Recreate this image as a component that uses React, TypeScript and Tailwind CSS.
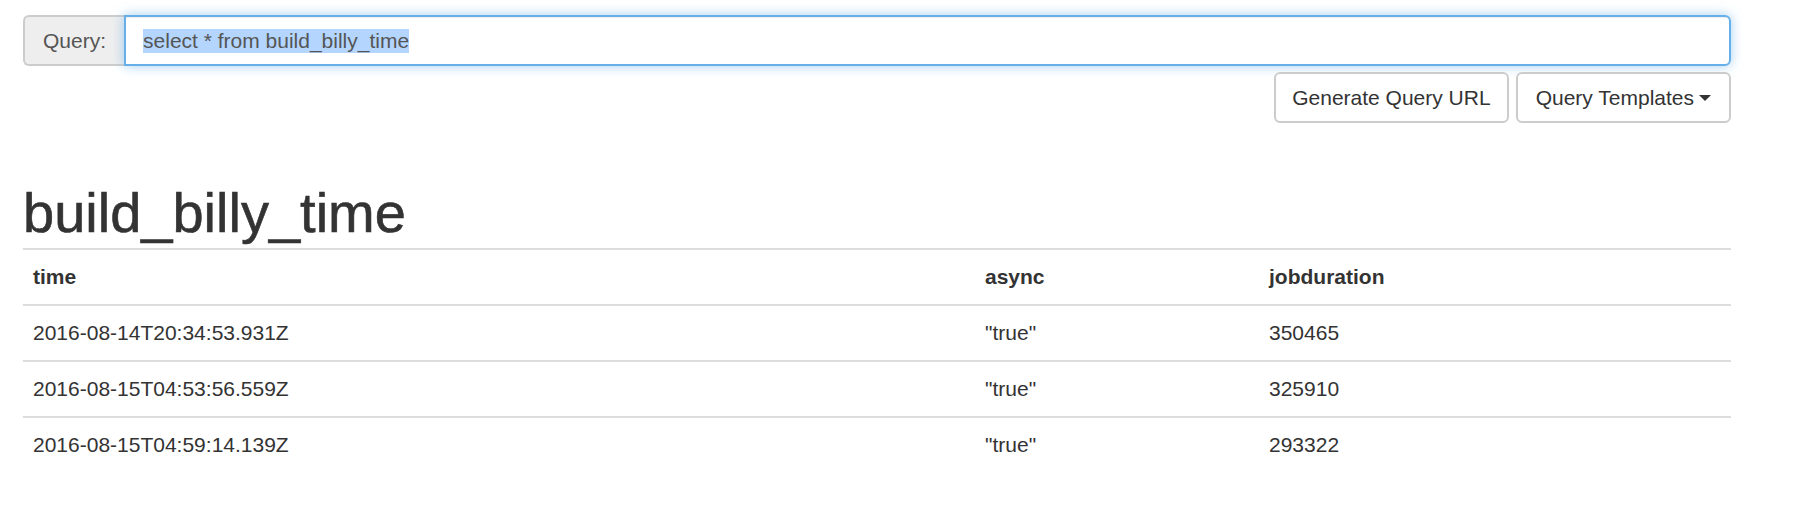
import React from "react"

const rows = [
  { time: "2016-08-14T20:34:53.931Z", async: "\"true\"", jobduration: "350465" },
  { time: "2016-08-15T04:53:56.559Z", async: "\"true\"", jobduration: "325910" },
  { time: "2016-08-15T04:59:14.139Z", async: "\"true\"", jobduration: "293322" },
]

export default function App() {
  return (
    <div className="min-h-screen bg-white font-['Liberation_Sans',Arial,sans-serif] text-[21px] text-[#333]">
      <div className="ml-[23px] w-[1708px] pt-[15px]">
        {/* query input */}
        <div className="flex h-[51px]">
          <span className="flex items-center rounded-l-[6px] border-2 border-r-0 border-[#ccc] bg-[#eee] px-[18px] text-[#555]">
            Query:
          </span>
          <div className="flex flex-1 items-center rounded-r-[6px] border-2 border-[#66afe9] px-[17px] text-[#555] shadow-[inset_0_1px_1px_rgba(0,0,0,0.075),0_0_12px_rgba(102,175,233,0.6)]">
            <span className="bg-[#b4d5fe] leading-[24px]">select * from build_billy_time</span>
          </div>
        </div>

        <div className="mt-[6px] flex justify-end gap-[7px]">
          <button className="h-[51px] rounded-[6px] border-2 border-[#ccc] bg-white px-[16px] text-[#333]">
            Generate Query URL
          </button>
          <button className="flex h-[51px] items-center rounded-[6px] border-2 border-[#ccc] bg-white px-[18px] text-[#333]">
            Query Templates
            <span className="ml-[5px] inline-block h-0 w-0 border-x-[6px] border-t-[6px] border-x-transparent border-t-[#333]" />
          </button>
        </div>

        <h1 className="mt-[60px] mb-[5px] text-[56px] leading-[60px] font-normal [-webkit-text-stroke:0.6px_#333]">build_billy_time</h1>

        <table className="w-full border-collapse text-left">
          <thead>
            <tr className="border-t-2 border-[#ddd]">
              <th className="w-[952px] px-[10px] py-[12px] leading-[30px] font-bold">time</th>
              <th className="w-[284px] px-[10px] py-[12px] leading-[30px] font-bold">async</th>
              <th className="px-[10px] py-[12px] leading-[30px] font-bold">jobduration</th>
            </tr>
          </thead>
          <tbody>
            {rows.map((r) => (
              <tr key={r.time} className="border-t-2 border-[#ddd]">
                <td className="px-[10px] py-[12px] leading-[30px]">{r.time}</td>
                <td className="px-[10px] py-[12px] leading-[30px]">{r.async}</td>
                <td className="px-[10px] py-[12px] leading-[30px]">{r.jobduration}</td>
              </tr>
            ))}
          </tbody>
        </table>
      </div>
    </div>
  )
}
